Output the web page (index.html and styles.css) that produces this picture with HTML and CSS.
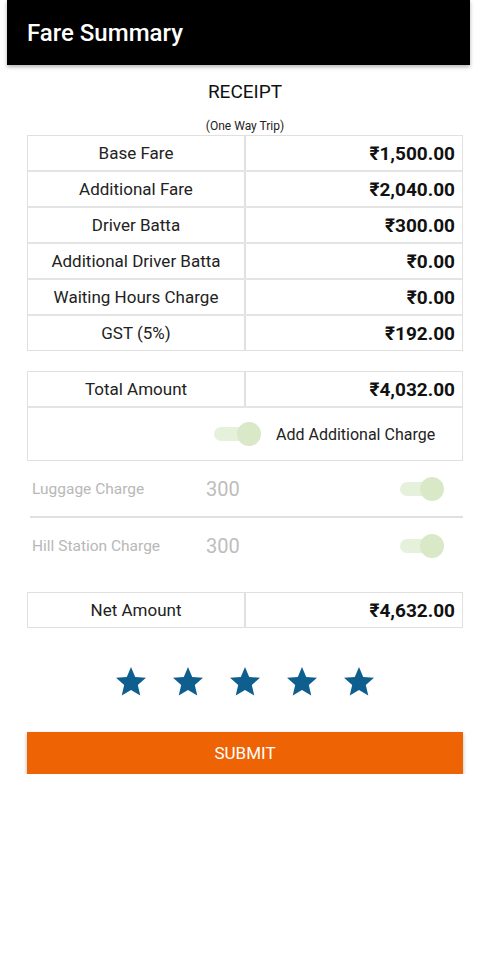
FILE: index.html
```html
<!DOCTYPE html>
<html lang="en">
<head>
    <meta charset="UTF-8">
    <meta name="viewport" content="width=device-width, initial-scale=1.0">
    <title>Fare Summary</title>
    <link rel="stylesheet" href="styles.css">
</head>
<body>
    <div class="topbar">
        <h1>Fare Summary</h1>
    </div>

    <div class="content">
        <h2 class="receipt-title">RECEIPT</h2>
        <div class="trip-type">(One Way Trip)</div>

        <div class="fare-table">
            <div class="fare-row"><span class="cell-label">Base Fare</span><span class="cell-value">₹1,500.00</span></div>
            <div class="fare-row"><span class="cell-label">Additional Fare</span><span class="cell-value">₹2,040.00</span></div>
            <div class="fare-row"><span class="cell-label">Driver Batta</span><span class="cell-value">₹300.00</span></div>
            <div class="fare-row"><span class="cell-label">Additional Driver Batta</span><span class="cell-value">₹0.00</span></div>
            <div class="fare-row"><span class="cell-label">Waiting Hours Charge</span><span class="cell-value">₹0.00</span></div>
            <div class="fare-row"><span class="cell-label">GST (5%)</span><span class="cell-value">₹192.00</span></div>
        </div>

        <div class="fare-table total-table">
            <div class="fare-row"><span class="cell-label">Total Amount</span><span class="cell-value">₹4,032.00</span></div>
            <div class="add-row">
                <span class="switch"><span class="thumb"></span></span>
                <span class="add-label">Add Additional Charge</span>
            </div>
        </div>

        <div class="extra-row with-line">
            <span class="extra-label">Luggage Charge</span>
            <span class="extra-amount">300</span>
            <span class="switch"><span class="thumb"></span></span>
        </div>
        <div class="extra-row">
            <span class="extra-label">Hill Station Charge</span>
            <span class="extra-amount">300</span>
            <span class="switch"><span class="thumb"></span></span>
        </div>

        <div class="fare-table net-table">
            <div class="fare-row"><span class="cell-label">Net Amount</span><span class="cell-value">₹4,632.00</span></div>
        </div>

        <div class="stars">
            <svg viewBox="0 0 24 24"><path d="M12 17.27L18.18 21l-1.64-7.03L22 9.24l-7.19-.61L12 2 9.19 8.63 2 9.24l5.46 4.73L5.82 21z"/></svg>
            <svg viewBox="0 0 24 24"><path d="M12 17.27L18.18 21l-1.64-7.03L22 9.24l-7.19-.61L12 2 9.19 8.63 2 9.24l5.46 4.73L5.82 21z"/></svg>
            <svg viewBox="0 0 24 24"><path d="M12 17.27L18.18 21l-1.64-7.03L22 9.24l-7.19-.61L12 2 9.19 8.63 2 9.24l5.46 4.73L5.82 21z"/></svg>
            <svg viewBox="0 0 24 24"><path d="M12 17.27L18.18 21l-1.64-7.03L22 9.24l-7.19-.61L12 2 9.19 8.63 2 9.24l5.46 4.73L5.82 21z"/></svg>
            <svg viewBox="0 0 24 24"><path d="M12 17.27L18.18 21l-1.64-7.03L22 9.24l-7.19-.61L12 2 9.19 8.63 2 9.24l5.46 4.73L5.82 21z"/></svg>
        </div>

        <button class="submit-button">SUBMIT</button>
    </div>
</body>
</html>
```

FILE: styles.css
```css
body {
    font-family: Roboto, "Noto Sans", sans-serif;
    background-color: #fff;
    color: #222;
    margin: 0;
}

.topbar {
    background-color: #000;
    height: 65px;
    margin: 0 10px 0 7px;
    box-shadow: 0 2px 4px rgba(0,0,0,0.3);
    display: flex;
    align-items: center;
}
.topbar h1 {
    margin: 0 0 0 20px;
    color: #fff;
    font-size: 24px;
    font-weight: 500;
}

.content {
    margin: 0 17px 0 27px;
}

.receipt-title {
    margin: 16px 0 0;
    text-align: center;
    font-size: 19px;
    font-weight: 400;
    line-height: 22px;
    color: #111;
}
.trip-type {
    margin-top: 15px;
    text-align: center;
    font-size: 12px;
    line-height: 16px;
    color: #222;
}

.fare-table {
    margin-top: 1px;
    border: 1px solid #e0e0e0;
}
.fare-row {
    display: flex;
    height: 34px;
    border-bottom: 2px solid #e4e4e4;
}
.fare-row:last-child {
    border-bottom: none;
}
.cell-label {
    flex: 0 0 216px;
    display: flex;
    align-items: center;
    justify-content: center;
    font-size: 17px;
    color: #222;
    border-right: 2px solid #e0e0e0;
}
.cell-value {
    flex: 1;
    display: flex;
    align-items: center;
    justify-content: flex-end;
    padding-right: 7px;
    font-size: 19px;
    font-weight: 700;
    color: #111;
}

.total-table {
    margin-top: 20px;
}
.total-table .fare-row {
    border-bottom: 2px solid #e4e4e4;
}
.add-row {
    height: 52px;
    display: flex;
    align-items: center;
    padding-left: 186px;
}
.add-label {
    margin-left: 15px;
    font-size: 16px;
}

.switch {
    position: relative;
    display: inline-block;
    width: 47px;
    height: 24px;
}
.switch:before {
    content: "";
    position: absolute;
    left: 0;
    top: 5px;
    width: 38px;
    height: 14px;
    border-radius: 7px;
    background-color: #e6f1dc;
}
.thumb {
    position: absolute;
    right: 0;
    top: 0;
    width: 24px;
    height: 24px;
    border-radius: 50%;
    background-color: #d9e9c7;
}

.extra-row {
    display: flex;
    align-items: center;
    height: 55px;
    padding: 0 19px 0 5px;
}
.extra-row.with-line {
    border-bottom: 2px solid #e0e0e0;
    margin-left: 3px;
    padding-left: 2px;
}
.extra-label {
    flex: 0 0 174px;
    font-size: 15.5px;
    color: #b8b8b8;
}
.extra-amount {
    flex: 1;
    font-size: 20px;
    color: #bdbdbd;
}
.extra-row .switch {
    width: 44px;
}
.extra-row .switch:before {
    width: 34px;
}

.net-table {
    margin-top: 19px;
}

.stars {
    display: flex;
    justify-content: center;
    gap: 21px;
    margin-top: 36px;
}
.stars svg {
    width: 36px;
    height: 36px;
    fill: #0f5f8e;
}

.submit-button {
    display: block;
    width: 100%;
    height: 42px;
    margin-top: 32px;
    border: none;
    background-color: #ee6304;
    color: #fff;
    font-family: Roboto, sans-serif;
    font-size: 17px;
    box-shadow: 0 2px 4px rgba(0,0,0,0.3);
}
```
